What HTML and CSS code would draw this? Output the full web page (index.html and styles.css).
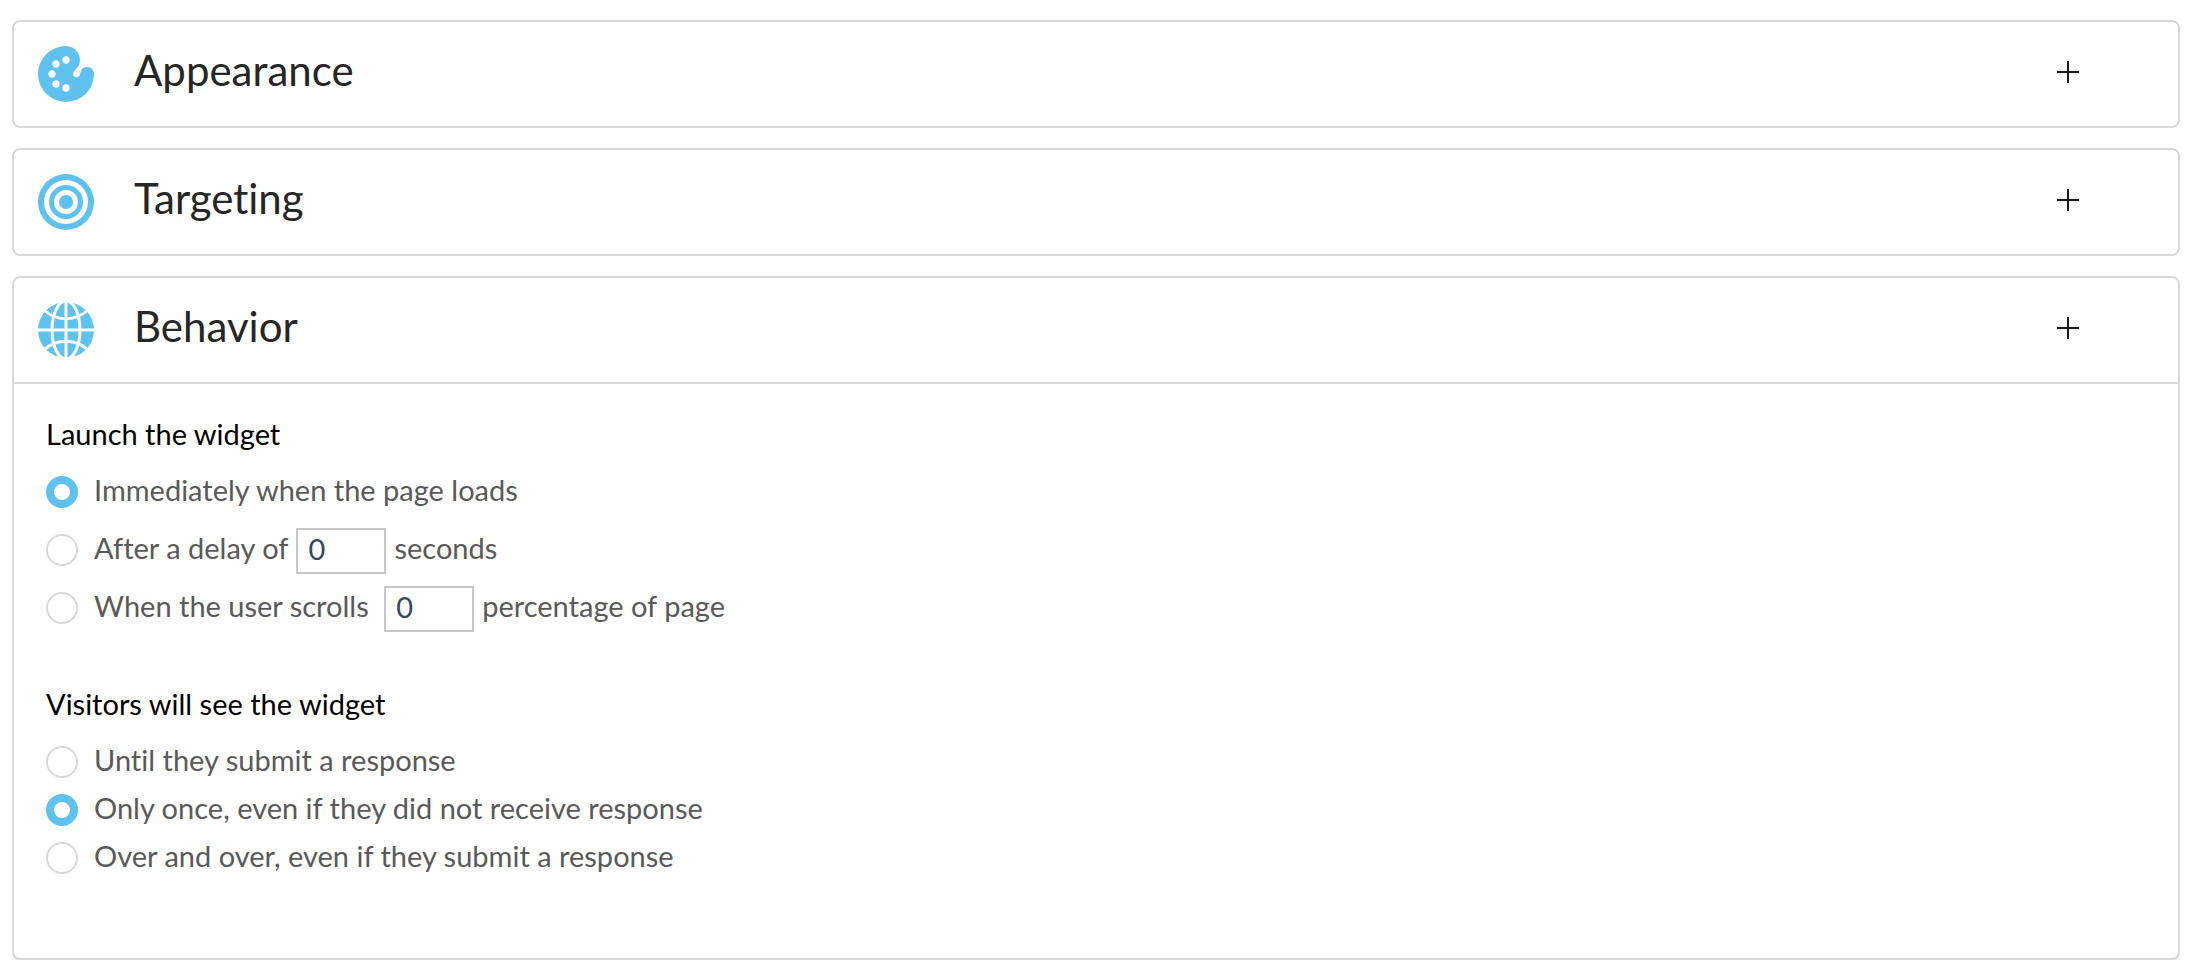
FILE: index.html
```
<!DOCTYPE html>
<html lang="en">
    <head>
        <meta charset="utf-8">
        <title>Widget settings</title>
        <link rel="stylesheet" href="styles.css">
    </head>
    <body>
        <section class="panel">
            <header class="panel-header">
                <svg class="panel-icon" viewBox="0 0 168 168" aria-hidden="true">
                    <path class="blue" d="M84 0A84 84 0 1 0 168 84C168 70 158 63 148 63C133 63 129 72 127 82C125 91 120 94 116 94C108 94 104 88 105 82C107 74 120 66 124 54A42 42 0 0 0 84 0Z"/>
                    <g class="white">
                        <circle cx="84" cy="42" r="11"/>
                        <circle cx="54" cy="54" r="11"/>
                        <circle cx="42" cy="84" r="11"/>
                        <circle cx="54" cy="114" r="11"/>
                        <circle cx="84" cy="126" r="11"/>
                    </g>
                </svg>
                <h2>Appearance</h2>
                <button type="button" class="toggle" aria-label="Expand Appearance">
                    <svg viewBox="0 0 22 22"><path d="M0 11h22M11 0v22"/></svg>
                </button>
            </header>
        </section>

        <section class="panel">
            <header class="panel-header">
                <svg class="panel-icon" viewBox="0 0 168 168" aria-hidden="true">
                    <circle class="blue" cx="84" cy="84" r="84"/>
                    <circle class="white" cx="84" cy="84" r="66"/>
                    <circle class="blue" cx="84" cy="84" r="51"/>
                    <circle class="white" cx="84" cy="84" r="36"/>
                    <circle class="blue" cx="84" cy="84" r="21"/>
                </svg>
                <h2>Targeting</h2>
                <button type="button" class="toggle" aria-label="Expand Targeting">
                    <svg viewBox="0 0 22 22"><path d="M0 11h22M11 0v22"/></svg>
                </button>
            </header>
        </section>

        <section class="panel open">
            <header class="panel-header">
                <svg class="panel-icon" viewBox="0 0 168 168" aria-hidden="true">
                    <circle class="blue" cx="84" cy="84" r="84"/>
                    <g class="grid-lines">
                        <path d="M84 -2V170M-2 84H170"/>
                        <ellipse cx="84" cy="84" rx="42" ry="87"/>
                        <path d="M18 24Q46 50 84 50Q122 50 150 24M18 144Q46 118 84 118Q122 118 150 144"/>
                    </g>
                </svg>
                <h2>Behavior</h2>
                <button type="button" class="toggle" aria-label="Collapse Behavior">
                    <svg viewBox="0 0 22 22"><path d="M0 11h22M11 0v22"/></svg>
                </button>
            </header>
            <form class="panel-body">
                <fieldset class="launch">
                    <legend>Launch the widget</legend>
                    <div class="option">
                        <input type="radio" name="launch" id="launch-now" checked>
                        <label for="launch-now">Immediately when the page loads</label>
                    </div>
                    <div class="option">
                        <input type="radio" name="launch" id="launch-delay">
                        <label for="launch-delay">After a delay of</label>
                        <input type="text" id="delay" value="0">
                        <label for="delay">seconds</label>
                    </div>
                    <div class="option">
                        <input type="radio" name="launch" id="launch-scroll">
                        <label for="launch-scroll">When the user scrolls&nbsp;</label>
                        <input type="text" id="scroll" value="0">
                        <label for="scroll">percentage of page</label>
                    </div>
                </fieldset>
                <fieldset class="visitors">
                    <legend>Visitors will see the widget</legend>
                    <div class="option">
                        <input type="radio" name="visitors" id="until-submit">
                        <label for="until-submit">Until they submit a response</label>
                    </div>
                    <div class="option">
                        <input type="radio" name="visitors" id="only-once" checked>
                        <label for="only-once">Only once, even if they did not receive response</label>
                    </div>
                    <div class="option">
                        <input type="radio" name="visitors" id="over-and-over">
                        <label for="over-and-over">Over and over, even if they submit a response</label>
                    </div>
                </fieldset>
            </form>
        </section>
    </body>
</html>
```
FILE: styles.css
```
* {
    box-sizing: border-box;
}
body {
    margin: 20px 12px 12px;
    background: #fff;
    font-family: Avenir, Lato, sans-serif;
    font-size: 29px;
    font-variant-ligatures: none;
    line-height: 40px;
    color: #595959;
}
.panel {
    margin-bottom: 20px;
    border: 2px solid #d8d8d8;
    border-radius: 8px;
    background: #fff;
}
.panel.open {
    margin-bottom: 0;
    box-shadow: 0 8px 16px rgba(0, 0, 0, 0.08);
}
.panel-header {
    display: flex;
    align-items: center;
    height: 104px;
    padding: 0 99px 0 24px;
}
.panel-icon {
    width: 56px;
    height: 56px;
    margin-right: 40px;
}
.blue {
    fill: #5ec1ee;
}
.white {
    fill: #fff;
}
.grid-lines {
    fill: none;
    stroke: #fff;
    stroke-width: 9;
}
.panel-header h2 {
    flex: 1;
    margin: 0;
    padding-bottom: 8px;
    font-size: 42px;
    font-weight: normal;
    line-height: 48px;
    color: #262626;
}
.toggle {
    display: flex;
    margin-bottom: 4px;
    padding: 0;
    border: 0;
    background: none;
    cursor: pointer;
}
.toggle svg {
    width: 22px;
    height: 22px;
    fill: none;
    stroke: #1a1a1a;
    stroke-width: 2;
}
.open .panel-header {
    height: 106px;
    border-bottom: 2px solid #d8d8d8;
}
.panel-body {
    padding: 30px 32px 77px;
}
fieldset {
    display: flex;
    flex-direction: column;
    min-width: 0;
    margin: 0;
    padding: 0;
    border: 0;
}
legend {
    margin-bottom: 15px;
    padding: 0;
    color: #000;
}
.launch {
    gap: 12px;
    margin-bottom: 53px;
}
.visitors {
    gap: 2px;
}
.option {
    display: flex;
    align-items: center;
    height: 46px;
}
.option label {
    padding-bottom: 4px;
}
input[type="radio"] {
    appearance: none;
    width: 32px;
    height: 32px;
    margin: 0 16px 0 0;
    border: 2px solid #d8d8d8;
    border-radius: 50%;
    background: #fff;
}
input[type="radio"]:checked {
    border: 8px solid #5ec1ee;
}
input[type="text"] {
    width: 90px;
    height: 46px;
    margin: 2px 8px 0;
    padding: 0 10px 6px;
    border: 2px solid #c8c8c8;
    border-radius: 0;
    font: inherit;
    color: #34495e;
}
```
